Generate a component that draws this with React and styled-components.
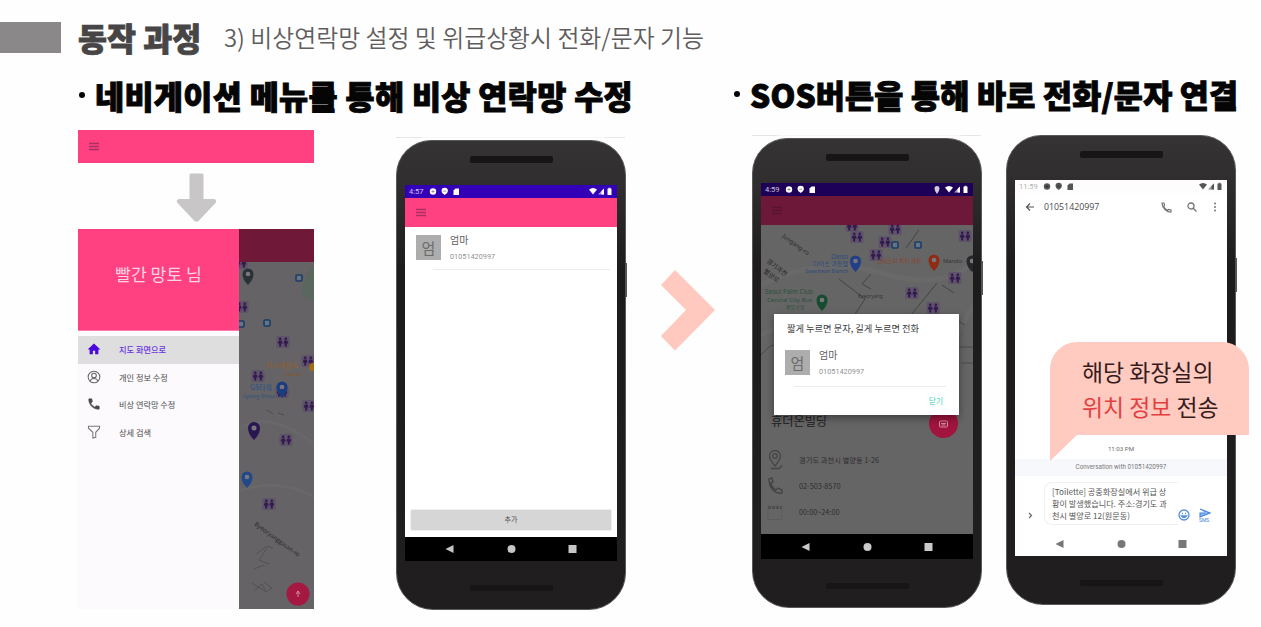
import React from 'react';
import styled, { createGlobalStyle } from 'styled-components';

const Global = createGlobalStyle`
  * { box-sizing: border-box; }
  body {
    margin: 0;
    background: #fefefe;
    font-family: "Noto Sans CJK KR", "Noto Sans", sans-serif;
  }
  svg { display: block; flex: none; }
`;

const Slide = styled.main`
  width: 1261px;
  height: 627px;
  overflow: hidden;
  background: #fefefe;
`;

const Header = styled.header`
  display: flex;
  align-items: flex-start;
  height: 76px;
  padding-top: 17px;
  white-space: nowrap;
`;
const Tab = styled.div`
  width: 61px;
  height: 31px;
  background: #8a8888;
  margin: 5px 17px 0 0;
`;
const Title = styled.h1`
  margin: 0 22px 0 0;
  width: 124px;
  font-size: 31.5px;
  line-height: 40px;
  font-weight: 900;
  color: #474545;
  -webkit-text-stroke: 0.8px #474545;
`;
const Subtitle = styled.div`
  font-size: 23.9px;
  line-height: 40px;
  font-weight: 350;
  color: #5f5d5d;
`;

const Headings = styled.div`
  display: flex;
  height: 54px;
  padding-left: 79px;
  white-space: nowrap;
`;
const Heading = styled.h2`
  margin: 0;
  margin-top: ${(p) => p.$top}px;
  width: ${(p) => p.$w}px;
  display: flex;
  align-items: center;
  font-size: 31.6px;
  line-height: 44px;
  height: 44px;
  font-weight: 900;
  letter-spacing: ${(p) => p.$ls}px;
  color: #050505;
  -webkit-text-stroke: 1px #050505;
`;
const Bullet = styled.i`
  width: 6px;
  height: 6px;
  margin: 0 10px 1px 0;
  border-radius: 50%;
  background: #050505;
`;

const Body = styled.div`
  display: flex;
  align-items: flex-start;
  padding-left: 78px;
`;

const NavColumn = styled.section`
  width: 236px;
  display: flex;
  flex-direction: column;
  align-items: center;
  margin-right: 82px;
`;
const AppBar = styled.div`
  width: 100%;
  height: ${(p) => p.$h}px;
  flex: none;
  display: flex;
  align-items: center;
  padding-left: 11px;
  background: ${(p) => p.$bg || '#ff4081'};
`;
const ArrowSlot = styled.div`
  height: 66px;
  padding-top: 9px;
`;
const DrawerShot = styled.div`
  display: flex;
  width: 236px;
  height: 380px;
`;
const Drawer = styled.div`
  width: 161px;
  background: #fcfafc;
`;
const DrawerHead = styled.div`
  height: 102px;
  border-bottom: 1px solid #ff7aa8;
  padding-bottom: 13px;
  margin-bottom: 5px;
  display: flex;
  align-items: center;
  justify-content: center;
  background: #ff4081;
  color: #ffd3e2;
  font-size: 17.2px;
`;
const DrawerItem = styled.div`
  display: flex;
  align-items: center;
  height: 27.7px;
  padding: 0 0 2px 9px;
  gap: 18px;
  font-size: 8.2px;
  font-weight: ${(p) => (p.$on ? 500 : 400)};
  color: ${(p) => (p.$on ? '#6a35e0' : '#4b4a4b')};
  background: ${(p) => (p.$on ? '#dededf' : 'transparent')};
`;

const Phone = styled.section`
  position: relative;
  width: 230px;
  height: 470px;
  margin-top: ${(p) => p.$top}px;
  margin-right: ${(p) => p.$mr || 0}px;
  flex: none;
  display: flex;
  flex-direction: column;
  align-items: center;
  border-radius: 35px 35px 37px 37px;
  border: 1px solid #5a5959;
  background: linear-gradient(#353334 0, #302e2f 40px, #1d1b1c 130px, #201e1f 100%);
`;
const SideKey = styled.i`
  position: absolute;
  right: -2px;
  top: 122px;
  width: 2px;
  height: 34px;
  background: #555;
`;
const TopLine = styled.i`
  position: absolute;
  left: -1px;
  right: 0;
  top: -4px;
  height: 1px;
  background: linear-gradient(90deg, #e6e6e6 0 10%, #f6f6f6 12% 90%, #e6e6e6 92%);
`;
const Speaker = styled.div`
  flex: none;
  width: 83px;
  height: ${(p) => p.$h}px;
  margin: ${(p) => p.$m};
  border-radius: 2px;
  background: #171516;
`;
const Screen = styled.div`
  position: relative;
  flex: none;
  width: 212px;
  height: 376px;
  display: flex;
  flex-direction: column;
  overflow: hidden;
  background: ${(p) => p.$bg || '#fff'};
`;
const Status = styled.div`
  height: 13px;
  flex: none;
  display: flex;
  align-items: center;
  gap: 5px;
  padding: 0 4px;
  font-family: Roboto, sans-serif;
  font-size: 7.5px;
  color: ${(p) => p.$c};
  background: ${(p) => p.$bg};
`;
const Clock = styled.span`
  width: ${(p) => p.$w || 15}px;
  opacity: ${(p) => p.$o || 0.75};
`;
const Spacer = styled.div`
  flex: 1;
`;
const SoftNav = styled.div`
  height: ${(p) => p.$h}px;
  flex: none;
  display: flex;
  align-items: center;
  justify-content: space-between;
  padding: 0 40px;
  color: ${(p) => p.$c};
  background: ${(p) => p.$bg};
`;

const Contact = styled.div`
  display: flex;
  gap: 9px;
  padding: ${(p) => p.$pad};
`;
const Avatar = styled.div`
  width: 25px;
  height: 25px;
  display: flex;
  align-items: center;
  justify-content: center;
  background: #adadad;
  color: #6b6b6b;
  font-size: 15px;
  line-height: 20px;
`;
const ContactName = styled.div`
  font-size: 10px;
  line-height: 12px;
  color: #606060;
  margin-top: -1px;
`;
const ContactNumber = styled.div`
  font-family: Roboto, sans-serif;
  font-size: 7.3px;
  line-height: 10px;
  color: #929292;
  margin-top: 6px;
`;
const Divider = styled.div`
  height: 1px;
  margin: ${(p) => p.$m};
  background: #ececec;
`;
const AddButton = styled.div`
  height: 20px;
  margin: 0 6px 7px;
  display: flex;
  align-items: center;
  justify-content: center;
  padding-bottom: 2px;
  background: #d6d6d7;
  box-shadow: 0 0 2px #ccc;
  font-size: 7px;
  color: #4d4d4d;
`;

const Chevron = styled.div`
  width: 56px;
  margin: 140px 36px 0 34px;
`;

const PlaceName = styled.div`
  margin-top: 33px;
  padding-left: 10px;
  font-size: 12.2px;
  line-height: 18px;
  height: 35px;
  color: #222;
`;
const PlaceRow = styled.div`
  height: 26px;
  display: flex;
  align-items: center;
  gap: 16px;
  padding-left: 6px;
  font-size: 7.3px;
  color: #2e2d2d;
`;
const Fab = styled.div`
  position: absolute;
  right: 15px;
  top: 226px;
  width: 29px;
  height: 29px;
  border-radius: 50%;
  display: flex;
  align-items: center;
  justify-content: center;
  background: #a0143f;
`;
const Dialog = styled.div`
  position: absolute;
  left: 13px;
  top: 131px;
  width: 185px;
  height: 101px;
  background: #fff;
  box-shadow: 0 3px 8px rgba(0, 0, 0, 0.4);
`;
const DialogTitle = styled.div`
  padding: 7px 0 0 13px;
  font-size: 9.25px;
  line-height: 14px;
  white-space: nowrap;
  color: #3b3b3b;
`;
const DialogClose = styled.div`
  text-align: right;
  padding-right: 16px;
  margin-top: 8px;
  font-size: 7.7px;
  line-height: 12px;
  font-weight: 500;
  color: #6bdcc4;
`;

const ChatBar = styled.div`
  height: 28px;
  flex: none;
  display: flex;
  align-items: center;
  padding: 0 9px 0 10px;
  font-family: "Open Sans", sans-serif;
  font-size: 8.8px;
  color: #4a4a4a;
`;
const ChatNumber = styled.span`
  flex: 1;
  padding-left: 9px;
`;
const ChatActions = styled.div`
  display: flex;
  align-items: center;
  gap: 15px;
`;
const ChatTime = styled.div`
  text-align: center;
  font-family: Roboto, sans-serif;
  font-size: 6.2px;
  line-height: 10px;
  color: #6a6a6a;
  margin-bottom: 5px;
`;
const ChatNote = styled.div`
  height: 17px;
  background: #f7f8fb;
  text-align: center;
  font-family: Roboto, sans-serif;
  font-size: 6.3px;
  line-height: 17px;
  color: #777;
`;
const Composer = styled.div`
  height: 55px;
  display: flex;
  align-items: flex-end;
  padding: 0 13px 8px 13px;
`;
const ComposerIcon = styled.div`
  flex: none;
  padding-bottom: ${(p) => p.$b}px;
`;
const Draft = styled.div`
  width: 134px;
  flex: none;
  height: 43px;
  margin: 0 0 -2px 11px;
  padding: 3px 0 0 7px;
  border: 1px solid #f0f0f0;
  border-right: 0;
  border-radius: 8px 0 0 8px;
  font-size: 8.15px;
  line-height: 12px;
  white-space: nowrap;
  color: #555;
`;
const Send = styled.div`
  width: 14px;
  margin-left: 9px;
  font-family: Roboto, sans-serif;
  font-size: 5px;
  line-height: 5px;
  color: #3f84d8;
`;

const Bubble = styled.div`
  position: absolute;
  left: 43px;
  top: 206px;
  width: 199px;
  height: 93px;
  padding: 12px 0 0 32px;
  border-radius: 27px 27px 0 0;
  background: #ffcac0;
  font-size: 22.9px;
  line-height: 34.5px;
  white-space: nowrap;
  color: #351b1b;
  &::after {
    content: "";
    position: absolute;
    left: 0;
    top: 92px;
    width: 28px;
    height: 27px;
    background: #ffcac0;
    clip-path: polygon(0 0, 100% 0, 0 100%);
  }
`;
const Em = styled.span`
  color: #e43f40;
`;

const Menu = ({ c = '#a83060' }) => (
  <svg width="10" height="9" viewBox="0 0 10 9" stroke={c} strokeWidth="1.5">
    <path d="M0 1.5h10M0 4.5h10M0 7.5h10" />
  </svg>
);

const StatusIcons = () => (
  <svg width="32" height="9" viewBox="0 0 32 9" fill="currentColor">
    <circle cx="4" cy="4.5" r="3.2" />
    <path d="M2.4 4.5h3.2M4 3v3" stroke="#0005" />
    <path d="M12.500 4a3.200 3.200 0 0 1 6.400 0q0 2.500-3.200 4-3.200-1.500-3.200-4z" />
    <path d="M14.200 4.200h3" stroke="#0006" />
    <path d="M24.500 3.500L26.500 1.500H30v6.500h-5.500z" />
  </svg>
);
const SignalIcons = () => (
  <svg width="24" height="9" viewBox="0 0 24 9" fill="currentColor">
    <path d="M0 2.500q4-3 8 0L4 7.500z" />
    <path d="M9 7.500L15 1.500v6z" opacity=".6" />
    <path d="M12.500 7.500V4L15 1.500v6z" />
    <rect x="18.500" y="1.500" width="4" height="6.500" rx=".5" />
    <rect x="19.500" y=".8" width="2" height="1" />
  </svg>
);
const PinSmall = () => (
  <svg width="6" height="8" viewBox="0 0 6 8" fill="currentColor" opacity=".8">
    <path d="M3 0a2.500 2.500 0 0 1 2.500 2.500Q5.500 5 3 8 .5 5 .5 2.500A2.500 2.500 0 0 1 3 0z" />
  </svg>
);

const NavKeys = ({ h, c, bg }) => (
  <SoftNav $h={h} $c={c} $bg={bg}>
    <svg width="9" height="10" viewBox="0 0 9 10" fill="currentColor"><path d="M8.500 1v8L.5 5z" /></svg>
    <svg width="9" height="10" viewBox="0 0 9 10" fill="currentColor"><circle cx="4.500" cy="5" r="4" /></svg>
    <svg width="9" height="10" viewBox="0 0 9 10" fill="currentColor"><rect x=".5" y="1" width="8" height="8" /></svg>
  </SoftNav>
);

const Handset = ({ size = 14, c }) => (
  <svg width={size} height={size} viewBox="0 0 24 24" fill={c}>
    <path d="M6.600 10.800c1.400 2.800 3.800 5.100 6.600 6.600l2.200-2.200c.3-.3.700-.4 1-.2 1.100.4 2.300.6 3.600.6.600 0 1 .4 1 1V20c0 .6-.4 1-1 1C10.600 21 3 13.400 3 4c0-.6.5-1 1-1h3.500c.6 0 1 .4 1 1 0 1.200.2 2.400.6 3.600.1.300 0 .7-.2 1z" stroke={c} />
  </svg>
);

const Restroom = ({ x, y }) => (
  <g transform={`translate(${x} ${y})`}>
    <rect x="-6.500" y="-6" width="13" height="12" rx="1.500" fill="#5e5369" />
    <g fill="#32194f">
      <circle cx="-2.800" cy="-3.200" r="1.300" />
      <circle cx="2.800" cy="-3.200" r="1.300" />
      <path d="M-4.300-1.500h3l1 3h-1.500v3h-2v-3h-1.500zM1.300-1.500h3l1 3H3.800v3h-2v-3H.3z" />
    </g>
  </g>
);
const Pin = ({ x, y, c, r = 5 }) => (
  <g transform={`translate(${x} ${y})`}>
    <path d={`M${-r} 0a${r} ${r} 0 1 1 ${2 * r} 0q0 ${r} ${-r} ${r * 2}q${-r} ${-r} ${-r} ${-r * 2}z`} fill={c} />
    <circle r={r * 0.42} fill="#77777c" />
  </g>
);
const Stop = ({ x, y }) => (
  <rect x={x - 3} y={y - 3} width="6" height="6" rx="1" fill="#667385" stroke="#183d68" strokeWidth="1.600" />
);

const DrawerMap = () => (
  <svg width="75" height="380" viewBox="0 0 75 380" fontFamily="Noto Sans CJK KR, sans-serif">
    <rect width="75" height="380" fill="#656365" />
    <path d="M75 36q-13 15-12 30l12 6z" fill="#5a675f" />
    <path d="M0 200Q30 180 75 215M0 262q40-14 75 6" stroke="#696769" strokeWidth="3" fill="none" />
    <Restroom x={2} y={34} />
    <rect width="75" height="33" fill="#701838" />
    <Pin x={9} y={45} c="#2b3138" r={5.500} />
    <Stop x={60} y={49} />
    <Restroom x={3} y={78} />
    <Stop x={2} y={95} />
    <Stop x={28} y={94} />
    <Restroom x={44} y={113} />
    <Restroom x={69} y={132} />
    <text x="27" y="139" fontSize="7" fill="#94602f">더시계점 &amp;</text>
    <text x="46" y="147" fontSize="4.500" fill="#8a5527">Sundeo</text>
    <circle cx="74" cy="138" r="4" fill="#a36a1c" />
    <Restroom x={19} y={147} />
    <text x="11" y="161" fontSize="7" fill="#26528c">GS타워</text>
    <text x="4" y="169" fontSize="4.500" fill="#2c5180">Gyeong-Shinsa</text>
    <Restroom x={43} y={163} />
    <Pin x={43} y={158} c="#1c3c80" r={5.500} />
    <Restroom x={70} y={177} />
    <path d="M28 181l6 4M39 184l6 2" stroke="#4c4a4c" />
    <Pin x={15} y={199} c="#2a1650" r={6} />
    <Restroom x={47} y={211} />
    <Pin x={8} y={248} c="#22488a" r={5.500} />
    <Restroom x={30} y={275} />
    <text x="15" y="296" fontSize="6" fill="#2b2a2c" transform="rotate(36 15 296)">Byeoryanggasan-ro</text>
    <path d="M17 325l11-8 6 2M28 319l-8 12 10 4M15 340l10-4M13 354l14 9 6-4-8-6M15 362l8-7 4 8" stroke="#535153" fill="none" />
    <circle cx="59" cy="365" r="11.500" fill="#a41842" />
    <path d="M59 362v6M57 365l2-3 2 3" stroke="#d08a9f" fill="none" />
  </svg>
);

const PlaceMap = () => (
  <svg width="212" height="154" viewBox="0 0 212 154" fontFamily="Noto Sans, Noto Sans CJK KR, sans-serif">
    <rect width="212" height="154" fill="#666566" />
    <path d="M0 60q60-30 120-12t92-10M0 110q80-40 130 0t82-30" stroke="#6a696a" strokeWidth="5" fill="none" />
    <path d="M78 54l26 20-13 20M110 49l-9 10 9 5M176 58l-26 32M158 5l-13 18M181 60l12 8" stroke="#454445" fill="none" />
    <text x="21" y="12" fontSize="6" fill="#2b2a2b" transform="rotate(36 21 12)">Jungang-ro</text>
    <g fontSize="6.500" fill="#252425">
      <text x="5" y="37" transform="rotate(38 5 37)">경기과천</text>
      <text x="2" y="47" transform="rotate(38 2 47)">별양로</text>
    </g>
    <Restroom x={91} y={1} />
    <Restroom x={96} y={12} />
    <Restroom x={134} y={4} />
    <Restroom x={124} y={17} />
    <Stop x={134} y={20} />
    <Stop x={157} y={20} />
    <Restroom x={204} y={11} />
    <Restroom x={115} y={30} />
    <g fill="#2d4a7c" textAnchor="end">
      <text x="87" y="34" fontSize="6.500">Daiso</text>
      <text x="87" y="41" fontSize="6">다이소 과천점</text>
      <text x="87" y="48" fontSize="5">Gwacheon Branch</text>
    </g>
    <Pin x={94.500} y={36} c="#233f87" r={5.500} />
    <text x="116" y="38" fontSize="5.600" fill="#8c4326">크리스피 치킨 과천</text>
    <Pin x={173} y={35} c="#8e2c15" r={5.500} />
    <text x="182" y="38" fontSize="5.800" fill="#333233">Mando</text>
    <Pin x={211} y={36} c="#26282c" r={5.500} />
    <Restroom x={194} y={53} />
    <Restroom x={151} y={68} />
    <Restroom x={172} y={83} />
    <text x="97" y="73" fontSize="4.900" fill="#353435">Byeoryang</text>
    <g fill="#26513a">
      <text x="4" y="69" fontSize="6.300">Seoul Palm Club</text>
      <text x="6" y="77" fontSize="6.100">Central City Bus</text>
      <text x="25" y="84" fontSize="5">중앙공원</text>
    </g>
    <Pin x={61} y={75} c="#174c30" r={5.500} />
    <path d="M190 92l14 8M198 122h14M0 130q8-10 13-10M200 138h12" stroke="#4c4b4c" fill="none" />
  </svg>
);

const ContactRow = ({ pad }) => (
  <Contact $pad={pad}>
    <Avatar>엄</Avatar>
    <div>
      <ContactName>엄마</ContactName>
      <ContactNumber>01051420997</ContactNumber>
    </div>
  </Contact>
);

const PhoneFrame = ({ top, mr, bg, line, children, overlay }) => (
  <Phone $top={top} $mr={mr}>
    {line && <TopLine />}
    <SideKey />
    <Speaker $h={7} $m="15px 0 22px" />
    <Screen $bg={bg}>{children}</Screen>
    <Speaker $h={6} $m="24px 0 0" />
    {overlay}
  </Phone>
);

export default function App() {
  return (
    <Slide>
      <Global />
      <Header>
        <Tab />
        <Title>동작 과정</Title>
        <Subtitle>3) 비상연락망 설정 및 위급상황시 전화/문자 기능</Subtitle>
      </Header>
      <Headings>
        <Heading $top={-3} $w={655} $ls={0.35}><Bullet />네비게이션 메뉴를 통해 비상 연락망 수정</Heading>
        <Heading $top={-4} $w={520} $ls={0.2}><Bullet />SOS버튼을 통해 바로 전화/문자 연결</Heading>
      </Headings>
      <Body>
        <NavColumn>
          <AppBar $h={33}><Menu /></AppBar>
          <ArrowSlot>
            <svg width="41" height="51" viewBox="0 0 41 51">
              <path d="M15 1.500h11q1.500 0 1.500 1.500v24h10.500q3.500 1 1.500 4L22.500 49q-2 1.500-4 0L1.500 31q-2-3 1.500-4h10.500V3q0-1.500 1.500-1.500z" fill="#c8c6c7" />
            </svg>
          </ArrowSlot>
          <DrawerShot>
            <Drawer>
              <DrawerHead>빨간 망토 님</DrawerHead>
              <DrawerItem $on>
                <svg width="14" height="14" viewBox="0 0 24 24" fill="#4b08dc"><path d="M10 21v-6h4v6h5.500v-8H23L12 2.500 1 13h3.500v8z" /></svg>
                지도 화면으로
              </DrawerItem>
              <DrawerItem>
                <svg width="14" height="14" viewBox="0 0 24 24" fill="none" stroke="#666" strokeWidth="1.800">
                  <circle cx="12" cy="12" r="10" /><circle cx="12" cy="9.500" r="4" /><path d="M5 19q2-4.500 7-4.500t7 4.500" />
                </svg>
                개인 정보 수정
              </DrawerItem>
              <DrawerItem><Handset c="#4a4a4a" />비상 연락망 수정</DrawerItem>
              <DrawerItem>
                <svg width="14" height="14" viewBox="0 0 24 24" fill="none" stroke="#777" strokeWidth="1.800">
                  <path d="M2.500 2h19v3.500L15 12.500V21l-5 1.500v-10L2.500 5.500z" />
                </svg>
                상세 검색
              </DrawerItem>
            </Drawer>
            <DrawerMap />
          </DrawerShot>
        </NavColumn>

        <PhoneFrame top={10} line>
          <Status $bg="#3300b8" $c="#fff">
            <Clock>4:57</Clock><StatusIcons /><Spacer /><SignalIcons />
          </Status>
          <AppBar $h={29}><Menu /></AppBar>
          <ContactRow pad="8px 11px 0" />
          <Divider $m="7px 7px 0 28px" />
          <Spacer />
          <AddButton>추가</AddButton>
          <NavKeys h={24} c="#c6c6c6" bg="#000" />
        </PhoneFrame>

        <Chevron>
          <svg width="56" height="81" viewBox="0 0 56 81">
            <path d="M1 15L15 0l40 40-40 40.500L1 66l25-26z" fill="#ffc9bf" />
          </svg>
        </Chevron>

        <PhoneFrame top={8} mr={24} bg="#666566" line>
          <Status $bg="#1d0058" $c="#fff">
            <Clock>4:59</Clock><StatusIcons /><Spacer /><PinSmall /><SignalIcons />
          </Status>
          <AppBar $h={29} $bg="#6d1838"><Menu c="#58142f" /></AppBar>
          <PlaceMap />
          <PlaceName>휴더온빌딩</PlaceName>
          <PlaceRow>
            <svg width="16" height="21" viewBox="0 0 16 21" fill="none" stroke="#464546" strokeWidth="1.300">
              <path d="M8 16Q2.500 9.500 2.500 6a5.500 5.500 0 0 1 11 0Q13.500 9.500 8 16zM4 18.500h8l3-3" /><circle cx="8" cy="6" r="2.300" />
            </svg>
            경기도 과천시 별양동 1-26
          </PlaceRow>
          <PlaceRow>
            <svg width="16" height="18" viewBox="0 0 16 18" fill="none" stroke="#454445" strokeWidth="1.400">
              <path d="M2 2l3-1 1 4-2 1q1 5 5 7l2-2 4 2v3q-5 1-9-3T2 2z" />
            </svg>
            02-503-8570
          </PlaceRow>
          <PlaceRow>
            <svg width="16" height="16" viewBox="0 0 16 16" stroke="#504f50" fill="none">
              <path d="M1 2.500h14v13H1z" opacity=".4" /><path d="M1 3.500h14" strokeWidth="3" strokeDasharray="3 1" />
            </svg>
            00:00~24:00
          </PlaceRow>
          <Spacer />
          <NavKeys h={25} c="#cacaca" bg="#000" />
          <Fab>
            <svg width="9" height="8" viewBox="0 0 9 8" fill="none" stroke="#d58ba2"><rect x=".5" y="1" width="8" height="6" rx="1" /><path d="M2 3.500h5M2.500 5h4" /></svg>
          </Fab>
          <Dialog>
            <DialogTitle>짧게 누르면 문자, 길게 누르면 전화</DialogTitle>
            <ContactRow pad="15px 0 0 11px" />
            <Divider $m="9px 13px 0 20px" />
            <DialogClose>닫기</DialogClose>
          </Dialog>
        </PhoneFrame>

        <PhoneFrame
          top={5}
          overlay={
            <Bubble>
              <div>해당 화장실의</div>
              <div><Em>위치 정보</Em> 전송</div>
            </Bubble>
          }
        >
          <Status $bg="#fdfdfd" $c="#555">
            <Clock $w={19} $o={0.45}>11:59</Clock><StatusIcons /><Spacer /><SignalIcons />
          </Status>
          <ChatBar>
            <svg width="10" height="10" viewBox="0 0 10 10" fill="none" stroke="#555" strokeWidth="1.200"><path d="M9 5H1.500M5 1.500L1.500 5 5 8.500" /></svg>
            <ChatNumber>01051420997</ChatNumber>
            <ChatActions>
              <svg width="11" height="11" viewBox="0 0 11 11" fill="none" stroke="#777" strokeWidth="1.200"><path d="M1 1h2l.6 2.500L2.500 4.500Q4 7 6.500 8.500l1-1L10 8v2Q7 10.500 4 7.500T1 1z" /></svg>
              <svg width="10" height="10" viewBox="0 0 10 10" fill="none" stroke="#777" strokeWidth="1.300"><circle cx="4" cy="4" r="3" /><path d="M6.200 6.200L9.500 9.500" /></svg>
              <svg width="6" height="10" viewBox="0 0 6 10" fill="#777"><circle cx="3" cy="1.500" r="1" /><circle cx="3" cy="5" r="1" /><circle cx="3" cy="8.500" r="1" /></svg>
            </ChatActions>
          </ChatBar>
          <Spacer />
          <ChatTime>11:03 PM</ChatTime>
          <ChatNote>Conversation with 01051420997</ChatNote>
          <Composer>
            <ComposerIcon $b={4}>
              <svg width="5" height="7" viewBox="0 0 5 7" fill="none" stroke="#666" strokeWidth="1.200"><path d="M1 1l2.500 2.500L1 6" /></svg>
            </ComposerIcon>
            <Draft>
              <div>[Toilette] 공중화장실에서 위급 상</div>
              <div>황이 발생했습니다. 주소:경기도 과</div>
              <div>천시 별양로 12(원문동)</div>
            </Draft>
            <ComposerIcon $b={2}>
              <svg width="12" height="12" viewBox="0 0 12 12" fill="none" stroke="#5590dc" strokeWidth="1.300"><circle cx="6" cy="6" r="5" /><path d="M3.500 7q2.500 3 5 0zM4 4.500h1M7 4.500h1" /></svg>
            </ComposerIcon>
            <Send>
              <svg width="12" height="10" viewBox="0 0 12 10" fill="#8fb8ee" stroke="#3f84d8" strokeWidth="1.100"><path d="M1 1l10 4L1 9V5h5" /></svg>
              SMS
            </Send>
          </Composer>
          <NavKeys h={25} c="#777" bg="#fff" />
        </PhoneFrame>
      </Body>
    </Slide>
  );
}
